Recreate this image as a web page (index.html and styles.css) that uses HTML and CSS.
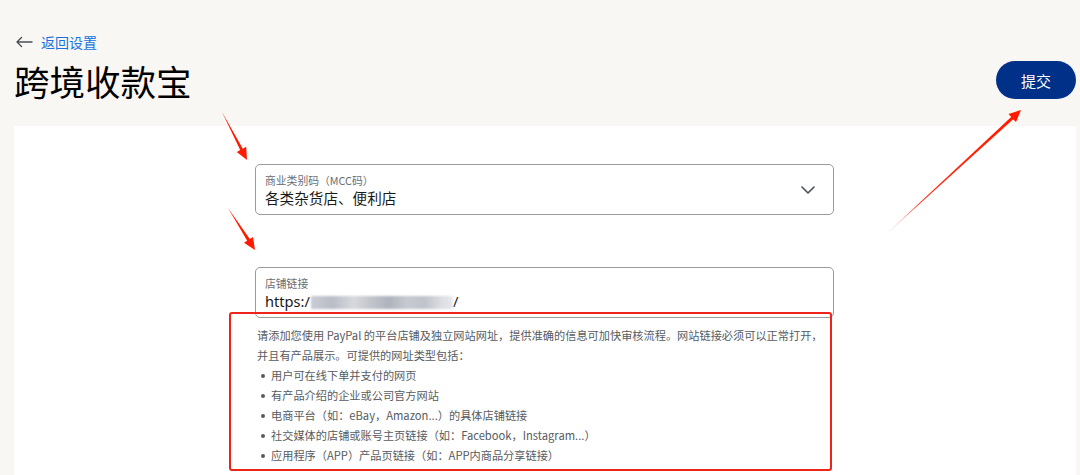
FILE: index.html
```html
<!DOCTYPE html>
<html lang="zh-CN">
<head>
<meta charset="utf-8">
<title>跨境收款宝</title>
<link rel="stylesheet" href="styles.css">
</head>
<body>
<div class="page">
  <a class="back" href="#">
    <svg class="back-icon" width="18" height="12" viewBox="0 0 18 12"><path d="M17 6H2M6.5 1.5L2 6l4.5 4.5" fill="none" stroke="#4a4f55" stroke-width="1.4" stroke-linecap="round" stroke-linejoin="round"/></svg>
    <span class="back-text">返回设置</span>
  </a>
  <div class="titlebar">
    <h1 class="title">跨境收款宝</h1>
    <button class="submit">提交</button>
  </div>
  <main class="card">
    <div class="form">
      <div class="field select">
        <div class="field-label">商业类别码（MCC码）</div>
        <div class="field-value">各类杂货店、便利店</div>
        <svg class="chevron" width="14" height="8" viewBox="0 0 14 8"><path d="M1 1l6 6 6-6" fill="none" stroke="#4a4f55" stroke-width="1.6" stroke-linecap="round" stroke-linejoin="round"/></svg>
      </div>
      <div class="field input">
        <div class="field-label">店铺链接</div>
        <div class="field-value">https:/<span class="blur"></span>/</div>
      </div>
      <div class="help">
        <p class="help-text">请添加您使用 PayPal 的平台店铺及独立网站网址，提供准确的信息可加快审核流程。网站链接必须可以正常打开，并且有产品展示。可提供的网址类型包括：</p>
        <ul class="help-list">
          <li>用户可在线下单并支付的网页</li>
          <li>有产品介绍的企业或公司官方网站</li>
          <li>电商平台（如：eBay，Amazon...）的具体店铺链接</li>
          <li>社交媒体的店铺或账号主页链接（如：Facebook，Instagram...）</li>
          <li>应用程序（APP）产品页链接（如：APP内商品分享链接）</li>
        </ul>
      </div>
    </div>
  </main>
</div>
<svg class="annotations" width="1080" height="475" viewBox="0 0 1080 475">
  <defs>
    <linearGradient id="fade3" gradientUnits="userSpaceOnUse" x1="883" y1="237" x2="1021" y2="110">
      <stop offset="0" stop-color="#ff2a10" stop-opacity="0"/>
      <stop offset="0.25" stop-color="#ff2a10" stop-opacity="1"/>
      <stop offset="1" stop-color="#ff1a00"/>
    </linearGradient>
  </defs>
  <polygon points="222,112 242.8,148.7 246.2,146.8 247,160 236.8,152 240.2,150.1" fill="#ff1a00"/>
  <polygon points="228,208 249.8,239.1 253,237 255,250 244,242.8 247.2,240.7" fill="#ff1a00"/>
  <polygon points="883,237 1011.2,117 1008.5,114 1021,110 1016,122 1013.2,119.2" fill="url(#fade3)"/>
</svg>
</body>
</html>
```

FILE: styles.css
```css
html, body {
  margin: 0;
  padding: 0;
}
body {
  width: 1080px;
  height: 475px;
  overflow: hidden;
  background: #f8f7f4;
  font-family: "Noto Sans", "Noto Sans CJK SC", sans-serif;
  color: #1f1f1f;
  position: relative;
}
.page {
  padding: 0 4px 0 14px;
  height: 475px;
  display: flex;
  flex-direction: column;
}
.back {
  display: flex;
  align-items: center;
  gap: 8px;
  margin-top: 33px;
  height: 18px;
  text-decoration: none;
}
.back-icon {
  display: block;
  margin-left: 1px;
}
.back-text {
  font-family: "Noto Sans CJK SC", sans-serif;
  font-size: 14px;
  color: #1672e0;
  line-height: 18px;
}
.titlebar {
  display: flex;
  justify-content: space-between;
  align-items: center;
  margin-top: 8px;
  height: 44px;
}
.title {
  margin: 0;
  font-family: "Noto Sans CJK SC", sans-serif;
  font-size: 35.5px;
  font-weight: 400;
  line-height: 44px;
  color: #000;
}
.submit {
  width: 80px;
  height: 38px;
  border: 0;
  border-radius: 19px;
  background: #003087;
  color: #fff;
  font-family: "Noto Sans CJK SC", sans-serif;
  font-size: 15px;
  padding: 0;
  margin-top: -2px;
}
.card {
  flex: 1;
  margin-top: 23px;
  background: #fff;
  padding: 38px 0 0 241px;
}
.form {
  width: 579px;
}
.field {
  position: relative;
  box-sizing: border-box;
  height: 51px;
  border: 1px solid #9b9b9b;
  border-radius: 5px;
  padding: 8px 9px 0 9px;
}
.input {
  margin-top: 52px;
}
.field-label {
  font-family: "Noto Sans CJK SC", sans-serif;
  font-size: 10.8px;
  line-height: 14px;
  color: #6b6e72;
}
.field-value {
  font-family: "Noto Sans", "Noto Sans CJK SC", sans-serif;
  font-size: 14.6px;
  line-height: 20px;
  margin-top: 1px;
  color: #1a1a1a;
  display: flex;
  align-items: center;
}
.chevron {
  position: absolute;
  right: 18px;
  top: 21px;
}
.blur {
  display: inline-block;
  width: 142px;
  height: 13px;
  margin: 2px 0 0 1px;
  background: linear-gradient(90deg, #c9ccd3 0%, #b9bdc6 15%, #d7d9de 30%, #c2c5cc 42%, #aeb3bd 55%, #c7cad1 68%, #bfc3cb 80%, #dcdee2 92%, #e8e9ec 100%);
  filter: blur(1.2px);
}
.help {
  position: relative;
  margin: -6px 0 0 -26px;
  width: 603px;
  box-sizing: border-box;
  border: 2px solid #f0231a;
  border-radius: 3px;
  padding: 11px 0 4px 26px;
  font-family: "Noto Sans CJK SC", sans-serif;
  font-size: 11.2px;
  line-height: 20px;
  color: #575b60;
}
.help-text {
  margin: 0;
}
.help-list {
  list-style: none;
  margin: 0;
  padding: 0;
}
.help-list li {
  position: relative;
  padding-left: 14px;
}
.help-list li::before {
  content: "";
  position: absolute;
  left: 4px;
  top: 9px;
  width: 4px;
  height: 4px;
  border-radius: 50%;
  background: #575b60;
}
.annotations {
  position: absolute;
  left: 0;
  top: 0;
  pointer-events: none;
}
```
